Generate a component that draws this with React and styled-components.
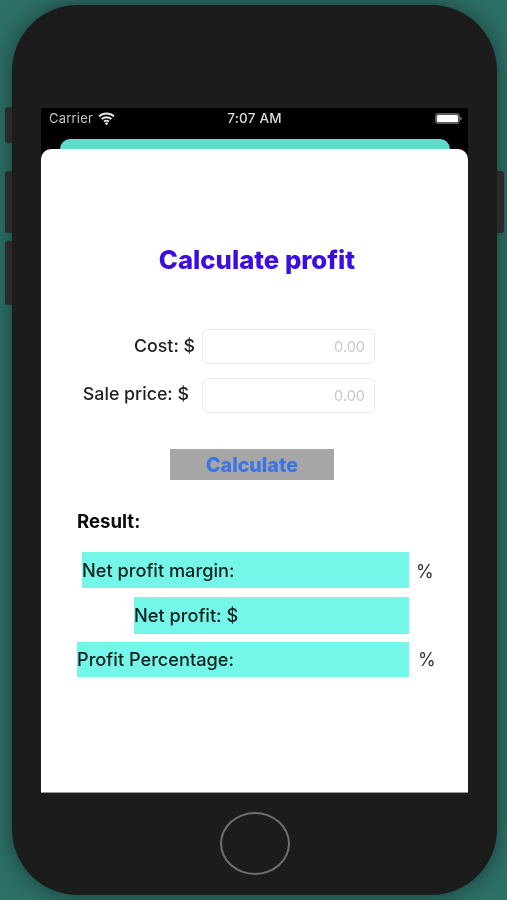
import React from 'react';
import styled, { createGlobalStyle } from 'styled-components';

const Global = createGlobalStyle`
html, body {
  margin: 0;
  padding: 0;
  width: 507px;
  height: 900px;
  overflow: hidden;
  background: #2d7066;
}
* { box-sizing: border-box; }
`;

const Page = styled.div`
width: 507px;
height: 900px;
padding: 5px 10px 5px 12px;
font-family: Inter, "Liberation Sans", sans-serif;
background: #2d7066;
overflow: hidden;
`;

const Device = styled.div`
position: relative;
width: 485px;
height: 890px;
padding: 103px 29px 102px 29px;
background: #1c1c1c;
border-radius: 66px;
box-shadow: 0 0 22px rgba(12, 28, 30, .6);
filter: blur(.45px);
`;

const SideButton = styled.div`
position: absolute;
left: ${p => p.$right ? '485px' : '-7px'};
top: ${p => p.$top}px;
width: 7px;
height: ${p => p.$height}px;
background: #2a2a2b;
border-radius: ${p => p.$right ? '0 3px 3px 0' : '3px 0 0 3px'};
`;

const Screen = styled.div`
height: 100%;
background: #000;
display: flex;
flex-direction: column;
`;

const StatusBar = styled.div`
height: 31px;
flex-shrink: 0;
padding: 0 8px 11px;
display: grid;
grid-template-columns: 1fr auto 1fr;
align-items: center;
color: #dcdcdc;
font-size: 13.5px;
font-weight: 500;
`;

const Carrier = styled.div`
display: flex;
align-items: center;
gap: 5px;
font-size: 13px;
font-weight: 400;
letter-spacing: .2px;
color: #c4c4c4;
`;

const Time = styled.div`
font-size: 13.5px;
letter-spacing: .2px;
`;

const Battery = styled.div`
justify-self: end;
position: relative;
width: 25px;
height: 11px;
border: 2px solid #5c5c5c;
border-radius: 3.5px;
background: #fff;

&::after {
  content: '';
  position: absolute;
  right: -4px;
  top: 2px;
  width: 2px;
  height: 3px;
  background: #5c5c5c;
  border-radius: 0 2px 2px 0;
}
`;

const BackSheet = styled.div`
height: 10px;
flex-shrink: 0;
margin: 0 18px 0 19px;
background: #60dccd;
border-radius: 10px 10px 0 0;
`;

const Sheet = styled.div`
flex: 1;
background: #fff;
border-radius: 10px 10px 0 0;
padding: 96px 0 0 0;
border-bottom: 1px solid #9a9a9a;
`;

const Title = styled.h1`
margin: 0 0 54px 5px;
text-align: center;
font-size: 25.7px;
line-height: 30px;
font-weight: 800;
color: #3d0ce0;
`;

const FormRow = styled.div`
display: flex;
align-items: center;
justify-content: flex-end;
gap: ${p => p.$gap}px;
height: 35px;
width: 334px;
margin-bottom: 14px;
`;

const FieldLabel = styled.label`
font-size: 17.8px;
font-weight: 450;
line-height: 22px;
margin-top: ${p => p.$up}px;
color: #1f1f1f;
`;

const Field = styled.input`
width: 173px;
height: 35px;
padding: 0 9px 0 0;
border: 1px solid #eaeaea;
border-radius: 6px;
background: #fff;
text-align: right;
font-family: inherit;
font-size: 14.5px;

&::placeholder { color: #c9c9c9; opacity: 1; }
`;

const CalcButton = styled.button`
display: block;
width: 164px;
height: 31px;
margin: 36px 0 0 129px;
border: 0;
padding: 0;
background: #a6a6a6;
color: #3a75e8;
font-family: inherit;
font-size: 19.6px;
font-weight: 800;
`;

const ResultTitle = styled.div`
margin: 31px 0 0 36px;
height: 20px;
line-height: 20px;
font-size: 18.6px;
font-weight: 700;
color: #0c0c0c;
`;

const Results = styled.div`
margin-top: 21px;
display: flex;
flex-direction: column;
gap: 8.5px;
`;

const ResultRow = styled.div`
display: flex;
align-items: center;
padding-left: ${p => p.$indent}px;
`;

const ResultBar = styled.div`
width: ${p => 368 - p.$indent}px;
height: ${p => p.$height}px;
display: flex;
align-items: center;
padding-bottom: 1px;
background: #74f7e9;
color: #111f1e;
font-size: 18.2px;
font-weight: 450;
`;

const Unit = styled.span`
margin-left: ${p => p.$gap}px;
margin-top: ${p => p.$drop}px;
font-size: 18px;
color: #333;
`;

const HomeButton = styled.div`
position: absolute;
left: 208px;
bottom: 20px;
width: 70px;
height: 63px;
border: 2.5px solid #6f6f6f;
border-radius: 50%;
`;

const WifiIcon = () => (
  <svg width="17" height="13" viewBox="0 0 17 13" fill="none" stroke="#e8e8e8" strokeWidth="1.9" strokeLinecap="butt">
    <path d="M1 4.4C5.2 .6 11.8 .6 16 4.4" />
    <path d="M3.6 7C6.4 4.6 10.6 4.6 13.4 7" />
    <path d="M6 9.6C7.4 8.5 9.6 8.5 11 9.6" />
    <circle cx="8.5" cy="11.6" r="1.3" fill="#e8e8e8" stroke="none" />
  </svg>
);

const results = [
  { label: 'Net profit margin:', indent: 41, height: 36, unit: '%', gap: 7, drop: 2 },
  { label: 'Net profit: $', indent: 93, height: 37 },
  { label: 'Profit Percentage:', indent: 36, height: 35, unit: '%', gap: 9, drop: 0 },
];

export default function App() {
  return (
    <Page>
      <Global />
      <Device>
        <SideButton $top={102} $height={36} />
        <SideButton $top={166} $height={62} />
        <SideButton $top={236} $height={64} />
        <SideButton $right $top={166} $height={62} />
        <Screen>
          <StatusBar>
            <Carrier>Carrier <WifiIcon /></Carrier>
            <Time>7:07 AM</Time>
            <Battery />
          </StatusBar>
          <BackSheet />
          <Sheet>
            <Title>Calculate profit</Title>
            <FormRow $gap={7}>
              <FieldLabel $up={-2}>Cost: $</FieldLabel>
              <Field placeholder="0.00" />
            </FormRow>
            <FormRow $gap={13}>
              <FieldLabel $up={-3}>Sale price: $</FieldLabel>
              <Field placeholder="0.00" />
            </FormRow>
            <CalcButton>Calculate</CalcButton>
            <ResultTitle>Result:</ResultTitle>
            <Results>
              {results.map(r => (
                <ResultRow key={r.label} $indent={r.indent}>
                  <ResultBar $indent={r.indent} $height={r.height}>{r.label}</ResultBar>
                  {r.unit && <Unit $gap={r.gap} $drop={r.drop}>{r.unit}</Unit>}
                </ResultRow>
              ))}
            </Results>
          </Sheet>
        </Screen>
        <HomeButton />
      </Device>
    </Page>
  );
}
